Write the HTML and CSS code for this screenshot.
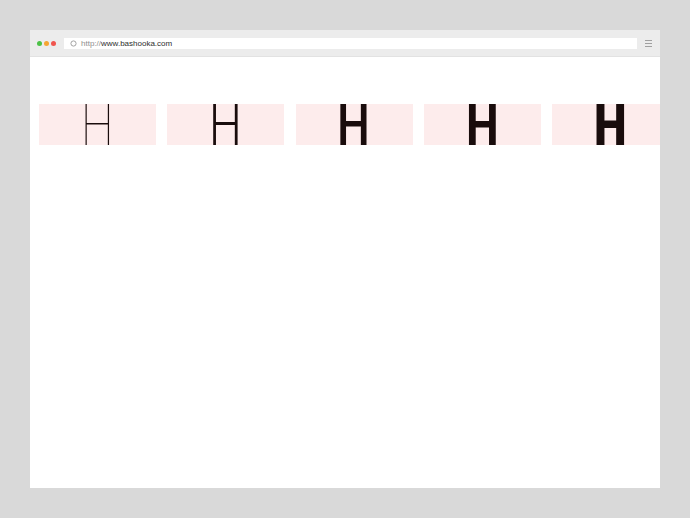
FILE: index.html
```html
<!DOCTYPE html>
<html>
<head>
<meta charset="utf-8">
<link rel="stylesheet" href="styles.css">
</head>
<body>
<div class="window">
  <div class="toolbar">
    <div class="dots">
      <span class="dot green"></span>
      <span class="dot orange"></span>
      <span class="dot red"></span>
    </div>
    <div class="address">
      <svg class="reload" width="7" height="7" viewBox="0 0 7 7"><circle cx="3.5" cy="3.5" r="2.6" fill="none" stroke="#9a9a9a" stroke-width="0.9"/></svg>
      <span class="proto">http://</span><span class="host">www.bashooka.com</span>
    </div>
    <div class="menu">
      <span></span><span></span><span></span>
    </div>
  </div>
  <div class="content">
    <div class="row">
      <div class="cell"><span class="glyph w1">H</span></div>
      <div class="cell"><span class="glyph w2">H</span></div>
      <div class="cell"><span class="glyph w3">H</span></div>
      <div class="cell"><span class="glyph w4">H</span></div>
      <div class="cell"><span class="glyph w5">H</span></div>
    </div>
  </div>
</div>
</body>
</html>
```

FILE: styles.css
```css
html, body {
  margin: 0;
  padding: 0;
  background: #d9d9d9;
  font-family: "Liberation Sans", Arial, sans-serif;
}
body {
  padding: 30px;
  width: 630px;
  height: 458px;
}
.window {
  width: 630px;
  height: 458px;
  background: #ffffff;
  overflow: hidden;
  display: flex;
  flex-direction: column;
}
.toolbar {
  height: 27px;
  background: #ececec;
  border-bottom: 1px solid #e2e2e2;
  display: flex;
  align-items: center;
  padding: 0 8px 0 7px;
  box-sizing: border-box;
}
.dots {
  display: flex;
  gap: 2px;
  margin-right: 8px;
  margin-top: 1px;
}
.dot {
  width: 5px;
  height: 5px;
  border-radius: 50%;
  display: block;
}
.green { background: #4cc147; }
.orange { background: #f5a532; }
.red { background: #f0554e; }
.address {
  flex: 1;
  height: 11px;
  background: #ffffff;
  display: flex;
  align-items: center;
  padding-left: 6px;
  font-size: 8px;
  margin-top: 1px;
  margin-right: 1px;
}
.reload { margin-right: 4px; }
.proto { color: #8e8e8e; }
.host { color: #2e2e2e; }
.menu {
  width: 7px;
  margin-left: 7px;
  display: flex;
  flex-direction: column;
  gap: 2px;
}
.menu span {
  display: block;
  height: 1px;
  background: #a0a0a0;
}
.content {
  flex: 1;
  padding: 47px 0 0 9px;
}
.row {
  display: flex;
  gap: 11.25px;
}
.cell {
  flex: 0 0 117px;
  height: 41px;
  background: #fdecec;
  display: flex;
  justify-content: center;
  overflow: visible;
}
.glyph {
  font-family: Roboto, sans-serif;
  font-size: 58px;
  line-height: 42px;
  height: 41px;
  color: #190c0c;
  transform: scaleX(0.8);
  display: block;
}
.w1 { font-weight: 100; }
.w2 { font-weight: 300; }
.w3 { font-weight: 500; }
.w4 { font-weight: 700; }
.w5 { font-weight: 900; }
```
